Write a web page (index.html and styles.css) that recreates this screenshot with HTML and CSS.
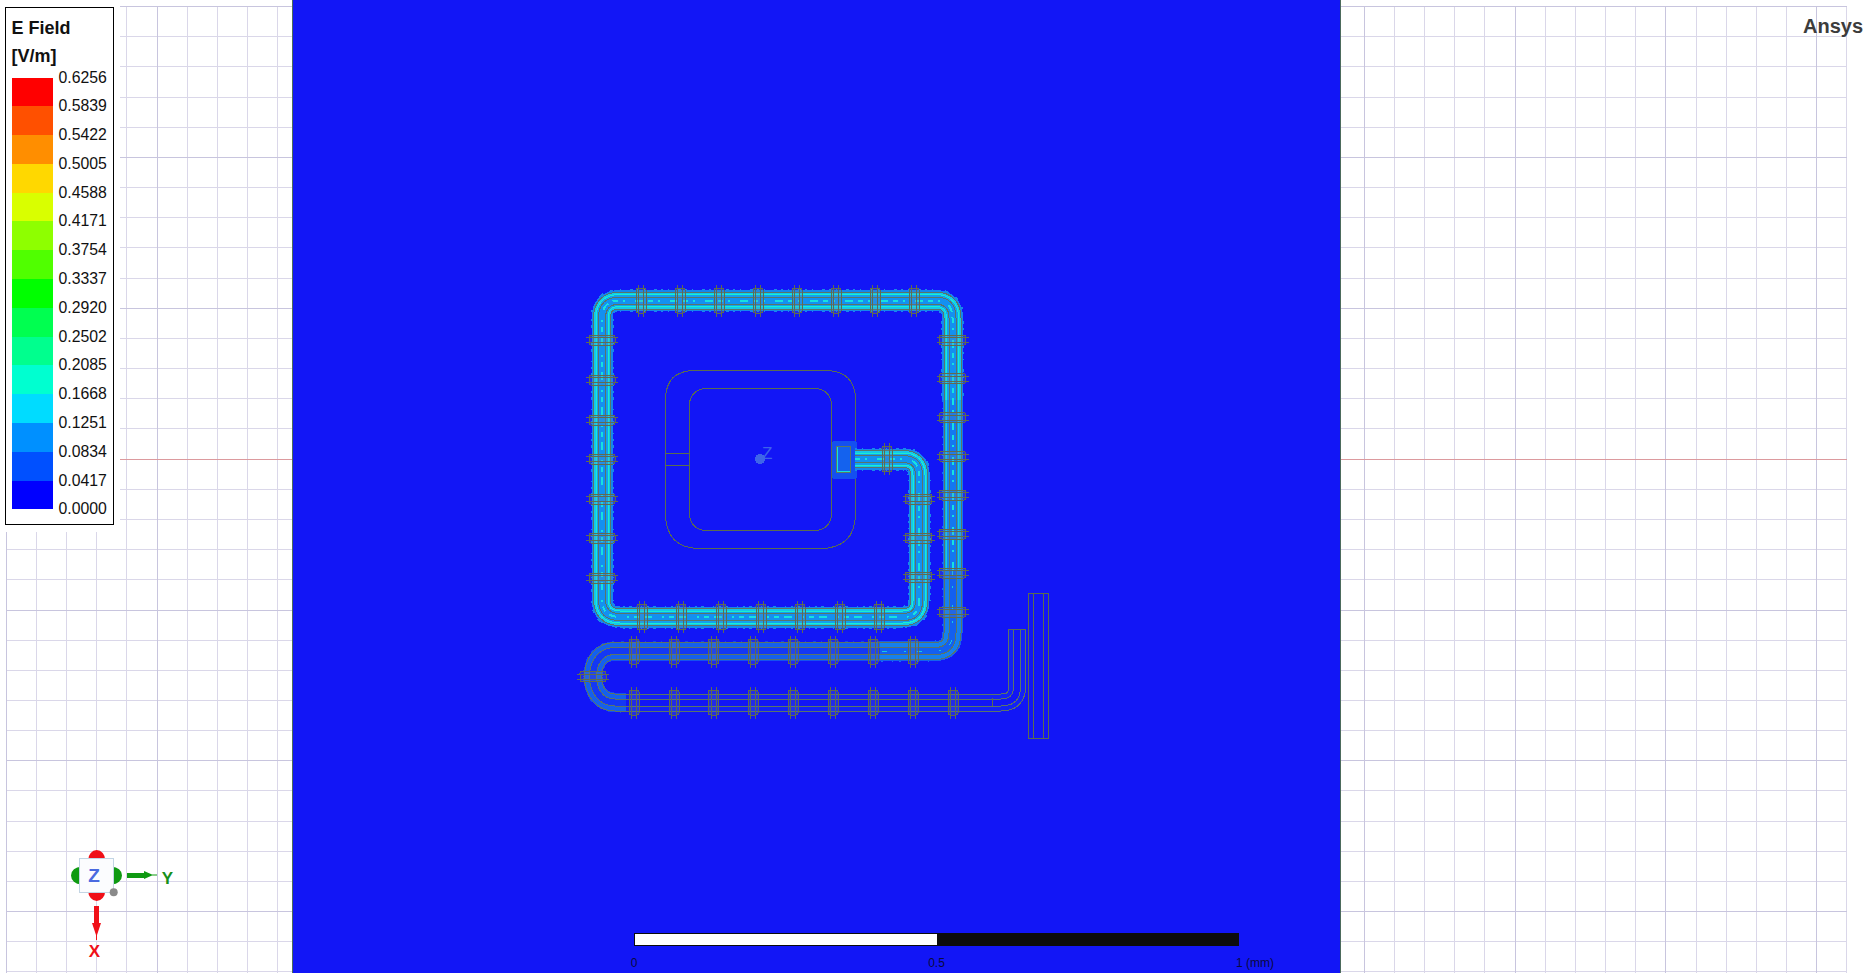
FILE: index.html
```html
<!DOCTYPE html>
<html lang="en">
<head>
<meta charset="utf-8">
<title>E Field</title>
<link rel="stylesheet" href="styles.css">
</head>
<body>
<main class="viewport">
  <section class="pane pane-left">
    <svg class="grid" width="292" height="973" viewBox="0 0 292 973">
      <path class="minor" d="M36.500 6V973M66.500 6V973M96.500 6V973M126.500 6V973M187.500 6V973M217.500 6V973M247.500 6V973M277.500 6V973M6 36.500H292M6 66.500H292M6 97.500H292M6 127.500H292M6 187.500H292M6 217.500H292M6 247.500H292M6 278.500H292M6 338.500H292M6 368.500H292M6 398.500H292M6 428.500H292M6 489.500H292M6 519.500H292M6 549.500H292M6 579.500H292M6 640.500H292M6 670.500H292M6 700.500H292M6 730.500H292M6 790.500H292M6 821.500H292M6 851.500H292M6 881.500H292M6 941.500H292M6 971.500H292"/>
      <path class="major" d="M6.500 6V973M157.500 6V973M6 6.500H292M6 157.500H292M6 308.500H292M6 610.500H292M6 760.500H292M6 911.500H292"/>
      <path class="axis" d="M6 459.500H292"/>
    </svg>
    <div class="legend-mask">
      <div class="legend">
        <div class="legend-title">E Field</div>
        <div class="legend-title">[V/m]</div>
        <div class="legend-body">
          <div class="swatches">
            <span class="sw sw1"></span><span class="sw sw2"></span><span class="sw sw3"></span><span class="sw sw4"></span><span class="sw sw5"></span>
            <span class="sw sw6"></span><span class="sw sw7"></span><span class="sw sw8"></span><span class="sw sw9"></span><span class="sw sw10"></span>
            <span class="sw sw11"></span><span class="sw sw12"></span><span class="sw sw13"></span><span class="sw sw14"></span><span class="sw sw15"></span>
          </div>
          <div class="labels">
            <span>0.6256</span><span>0.5839</span><span>0.5422</span><span>0.5005</span><span>0.4588</span><span>0.4171</span><span>0.3754</span><span>0.3337</span>
            <span>0.2920</span><span>0.2502</span><span>0.2085</span><span>0.1668</span><span>0.1251</span><span>0.0834</span><span>0.0417</span><span>0.0000</span>
          </div>
        </div>
      </div>
    </div>
    <svg class="triad" width="120" height="123" viewBox="60 850 120 123">
      <ellipse class="t-red" cx="96.700" cy="860" rx="8.500" ry="10"/>
      <ellipse class="t-red" cx="96.700" cy="891" rx="8.500" ry="10"/>
      <ellipse class="t-green" cx="81" cy="875.500" rx="10" ry="8.700"/>
      <ellipse class="t-green" cx="112" cy="875.500" rx="10" ry="8.700"/>
      <rect class="t-cube" x="79.500" y="858.500" width="34" height="34"/>
      <circle class="t-ball" cx="113.700" cy="892.300" r="4"/>
      <text class="t-letter t-z" x="94" y="882">Z</text>
      <path class="t-green" d="M127 873H144V871L152 874.500H157V875.500H152L144 879V878H127Z"/>
      <path class="t-red" d="M94 906H99V923H101L97 935V940H96V935L92 923H94Z"/>
      <text class="t-letter t-y" x="167.500" y="884">Y</text>
      <text class="t-letter t-x" x="94.500" y="957">X</text>
    </svg>
  </section>

  <section class="field">
    <svg class="diagram" width="1049" height="973" viewBox="292 0 1049 973">
      <defs>
        <path id="p-hot" d="M855 459H903Q919 459 919 475V601Q919 617 903 617H620Q602 617 602 599V318Q602 300.500 620 300.500H935Q952.500 300.500 952.500 318V400"/>
        <path id="p-warm" d="M952.500 400V570"/>
        <path id="p-mid" d="M952.500 570V633Q952.500 651 935 651H880"/>
        <path id="p-low" d="M880 651H615C601 651 593 662 593 676.500C593 691 601 702.500 615 702.500H626"/>
        <path id="p-tail" d="M626 702.500H1001Q1017 702.500 1017 687V629.500"/>
        <g id="bv">
          <rect class="br-in" x="-5" y="-12.500" width="10" height="25" rx="2"/>
          <path class="br" d="M-2.500 -16V16M2.500 -16V16"/>
        </g>
        <g id="bh">
          <rect class="br-in" x="-13" y="-5" width="26" height="10" rx="2"/>
          <path class="br" d="M-16 -2.500H16M-16 2.500H16"/>
        </g>
      </defs>

      <path class="edge" d="M292.500 0V973M1340.500 0V973"/>

      <g class="rings">
        <path d="M855.500 446V400Q855.500 370.500 825 370.500H695Q665.500 370.500 665.500 400V513Q665.500 548.500 700 548.500H820Q855.500 548.500 855.500 513V473"/>
        <rect x="689.500" y="388.500" width="142" height="142" rx="16"/>
        <path d="M665.500 453.500H689.500M665.500 465.500H689.500"/>
      </g>

      <rect class="pad-glow" x="832" y="441" width="25" height="38" rx="3"/>

      <use href="#p-hot" class="h-noise"/>
      <use href="#p-hot" class="h-fringe"/>
      <use href="#p-hot" class="rail-o"/>
      <use href="#p-hot" class="h-band"/>
      <use href="#p-hot" class="h-bright"/>
      <use href="#p-hot" class="h-band2"/>
      <use href="#p-hot" class="rail-i"/>
      <use href="#p-hot" class="h-core"/>
      <use href="#p-hot" class="h-spark"/>

      <use href="#p-warm" class="m-noise"/>
      <use href="#p-warm" class="w-fringe"/>
      <use href="#p-warm" class="rail-o"/>
      <use href="#p-warm" class="w-band"/>
      <use href="#p-warm" class="w-bright"/>
      <use href="#p-warm" class="w-band2"/>
      <use href="#p-warm" class="rail-i"/>
      <use href="#p-warm" class="w-core"/>
      <use href="#p-warm" class="h-spark"/>

      <use href="#p-mid" class="m-noise"/>
      <use href="#p-mid" class="m-fringe"/>
      <use href="#p-mid" class="rail-o"/>
      <use href="#p-mid" class="m-band"/>
      <use href="#p-mid" class="rail-i"/>
      <use href="#p-mid" class="m-core"/>
      <use href="#p-mid" class="m-spark"/>

      <use href="#p-low" class="l-noise"/>
      <use href="#p-low" class="l-fringe"/>
      <use href="#p-low" class="rail-o"/>
      <use href="#p-low" class="l-band"/>
      <use href="#p-low" class="rail-i"/>
      <use href="#p-low" class="l-core"/>

      <use href="#p-tail" class="rail-o"/>
      <use href="#p-tail" class="t-band"/>
      <use href="#p-tail" class="rail-i"/>
      <use href="#p-tail" class="t-core"/>

      <g class="rings">
        <path d="M1008 629.500H1026M992.500 698V706"/>
        <rect x="1028.500" y="593.500" width="20" height="145"/>
        <path d="M1033.500 594V738M1043.500 594V738"/>
      </g>

      <rect class="pad-in" x="837" y="446.500" width="13.500" height="25"/>
      <rect class="pad-out" x="836.500" y="446" width="14" height="26"/>

      <use href="#bv" x="641" y="300.500"/><use href="#bv" x="680" y="300.500"/><use href="#bv" x="719" y="300.500"/><use href="#bv" x="758" y="300.500"/>
      <use href="#bv" x="797" y="300.500"/><use href="#bv" x="836" y="300.500"/><use href="#bv" x="875" y="300.500"/><use href="#bv" x="914" y="300.500"/>

      <use href="#bh" x="602" y="340"/><use href="#bh" x="602" y="380"/><use href="#bh" x="602" y="420"/><use href="#bh" x="602" y="459"/>
      <use href="#bh" x="602" y="499"/><use href="#bh" x="602" y="538"/><use href="#bh" x="602" y="578"/>

      <use href="#bh" x="952.500" y="340"/><use href="#bh" x="952.500" y="378.500"/><use href="#bh" x="952.500" y="417.500"/><use href="#bh" x="952.500" y="456.500"/>
      <use href="#bh" x="952.500" y="495"/><use href="#bh" x="952.500" y="534"/><use href="#bh" x="952.500" y="573"/><use href="#bh" x="952.500" y="612"/>

      <use href="#bh" x="918.500" y="499"/><use href="#bh" x="918.500" y="538"/><use href="#bh" x="918.500" y="577"/>
      <use href="#bv" x="887" y="459"/>

      <use href="#bv" x="642" y="617"/><use href="#bv" x="681" y="617"/><use href="#bv" x="721" y="617"/><use href="#bv" x="761" y="617"/>
      <use href="#bv" x="800" y="617"/><use href="#bv" x="840" y="617"/><use href="#bv" x="879" y="617"/>

      <use href="#bv" x="634" y="651.500"/><use href="#bv" x="674" y="651.500"/><use href="#bv" x="713.500" y="651.500"/><use href="#bv" x="753" y="651.500"/>
      <use href="#bv" x="793" y="651.500"/><use href="#bv" x="833" y="651.500"/><use href="#bv" x="873" y="651.500"/><use href="#bv" x="913" y="651.500"/>

      <use href="#bv" x="634" y="702.500"/><use href="#bv" x="674" y="702.500"/><use href="#bv" x="713.500" y="702.500"/><use href="#bv" x="753" y="702.500"/>
      <use href="#bv" x="793" y="702.500"/><use href="#bv" x="833" y="702.500"/><use href="#bv" x="873" y="702.500"/><use href="#bv" x="913" y="702.500"/><use href="#bv" x="953" y="702.500"/>

      <use href="#bh" x="593" y="676.500"/>

      <path class="mark-red" d="M756 596H765.500L762 602L761.500 610H760L759.500 602Z"/>
      <path class="mark-green" d="M897 455L911 459L897 463Z"/>

      <text class="mark-z" x="762" y="458.500">Z</text>
      <circle class="mark-dot" cx="760" cy="459" r="5"/>
    </svg>
    <div class="scale">
      <div class="scale-bar"><span class="scale-white"></span><span class="scale-black"></span></div>
      <div class="scale-labels">
        <span class="tick">0</span>
        <span class="tick">0.5</span>
        <span class="tick tick-end">1 (mm)</span>
      </div>
    </div>
  </section>

  <section class="pane pane-right">
    <svg class="grid" width="534" height="973" viewBox="1341 0 534 973">
      <path class="minor" d="M1394.500 6V973M1424.500 6V973M1454.500 6V973M1484.500 6V973M1545.500 6V973M1575.500 6V973M1605.500 6V973M1635.500 6V973M1696.500 6V973M1726.500 6V973M1756.500 6V973M1786.500 6V973M1846.500 6V973M1341 36.500H1847M1341 66.500H1847M1341 97.500H1847M1341 127.500H1847M1341 187.500H1847M1341 217.500H1847M1341 247.500H1847M1341 278.500H1847M1341 338.500H1847M1341 368.500H1847M1341 398.500H1847M1341 428.500H1847M1341 489.500H1847M1341 519.500H1847M1341 549.500H1847M1341 579.500H1847M1341 640.500H1847M1341 670.500H1847M1341 700.500H1847M1341 730.500H1847M1341 790.500H1847M1341 821.500H1847M1341 851.500H1847M1341 881.500H1847M1341 941.500H1847M1341 971.500H1847"/>
      <path class="major" d="M1364.500 6V973M1515.500 6V973M1665.500 6V973M1816.500 6V973M1341 6.500H1847M1341 157.500H1847M1341 308.500H1847M1341 610.500H1847M1341 760.500H1847M1341 911.500H1847"/>
      <path class="axis" d="M1341 459.500H1847"/>
    </svg>
    <div class="brand">Ansys</div>
  </section>
</main>
</body>
</html>
```
FILE: styles.css
```css
* { box-sizing: border-box; }
html, body { margin: 0; padding: 0; background: #fff; }
body { font-family: "Liberation Sans", Arial, sans-serif; overflow: hidden; }

.viewport { display: flex; width: 1875px; height: 973px; overflow: hidden; }
.pane { position: relative; height: 973px; background: #fff; }
.pane-left { flex: 0 0 292px; }
.pane-right { flex: 0 0 534px; }
.field { position: relative; flex: 0 0 1049px; height: 973px; background: #1216f6; }

svg { display: block; }
.grid path { fill: none; stroke-width: 1; shape-rendering: crispEdges; }
.minor { stroke: #dad7e9; }
.major { stroke: #c8c5de; }
.axis { stroke: #dc9a9e; }

.legend-mask { position: absolute; left: 0; top: 0; width: 120px; height: 532px; background: #fff; padding: 7px 0 0 5px; }
.legend { width: 109px; height: 518px; border: 1.5px solid #000; background: #fff; padding: 7.5px 0 0 5.5px; color: #111; }
.legend-title { font-size: 18px; font-weight: 700; line-height: 24px; margin-bottom: 4px; position: relative; top: 0.5px; }
.legend-title + .legend-title { margin-bottom: 0; }
.legend-body { display: flex; gap: 6px; }
.swatches { display: flex; flex-direction: column; width: 41px; height: 432px; margin-top: 10px; }
.sw { flex: 1 1 0; }
.sw1 { background: #ff0000; } .sw2 { background: #ff5000; } .sw3 { background: #ff8e00; }
.sw4 { background: #ffd800; } .sw5 { background: #d9ff00; } .sw6 { background: #8eff00; }
.sw7 { background: #50ff00; } .sw8 { background: #00ff00; } .sw9 { background: #00ff50; }
.sw10 { background: #00ff8e; } .sw11 { background: #00ffd0; } .sw12 { background: #00dcff; }
.sw13 { background: #0090ff; } .sw14 { background: #0050ff; } .sw15 { background: #0000ff; }
.labels { display: flex; flex-direction: column; gap: 8.800px; font-size: 15.800px; line-height: 20px; }

.triad { position: absolute; left: 60px; top: 850px; }
.t-red { fill: #f01018; }
.t-green { fill: #0f9a12; }
.t-cube { fill: #fbfcfe; stroke: #c3d5e4; stroke-width: 1; }
.t-ball { fill: #8a8a8a; }
.t-letter { font-family: "Liberation Sans", Arial, sans-serif; font-weight: 700; text-anchor: middle; font-size: 17px; }
.t-z { fill: #4a6ae0; font-size: 19px; }
.t-y { fill: #16901a; }
.t-x { fill: #f01018; }

.diagram { shape-rendering: crispEdges; }
.diagram use, .diagram path { fill: none; }
.edge { stroke: #4c6a5c; stroke-width: 1; }
.rings, .rings path, .rings rect { fill: none; stroke: #5a6c50; stroke-width: 1; }
.pad-glow { fill: #1450f0; }
.pad-in { fill: #1462ee; stroke: #17e0d8; stroke-width: 1.500; }
.pad-out { fill: none; stroke: #5a7a64; stroke-width: 1; }

.rail-o { stroke: #5a7468; stroke-width: 18; }
.rail-i { stroke: #5a7468; stroke-width: 8; }

.h-noise { stroke: #168ae8; stroke-width: 23; stroke-dasharray: 2 5 1 9 3 4; }
.h-fringe { stroke: #1586ec; stroke-width: 21; }
.h-band { stroke: #14c8ec; stroke-width: 16; }
.h-bright { stroke: #18f0d0; stroke-width: 13; }
.h-band2 { stroke: #14a0ee; stroke-width: 11; }
.h-core { stroke: #1490f0; stroke-width: 6; }
.h-spark { stroke: #18e0e0; stroke-width: 2; stroke-dasharray: 5 5 2 10 8 5; }

.w-fringe { stroke: #1478ee; stroke-width: 20; }
.w-band { stroke: #14a8ec; stroke-width: 16; }
.w-bright { stroke: #16d0dc; stroke-width: 13; }
.w-band2 { stroke: #1488f0; stroke-width: 11; }
.w-core { stroke: #1478f0; stroke-width: 6; }

.m-noise { stroke: #1470ee; stroke-width: 21; stroke-dasharray: 2 6 1 9; }
.m-fringe { stroke: #1462ee; stroke-width: 20; }
.m-band { stroke: #1580ee; stroke-width: 16; }
.m-core { stroke: #1360f0; stroke-width: 6; }
.m-spark { stroke: #16c8e0; stroke-width: 1; stroke-dasharray: 5 11 2 17; }

.l-noise { stroke: #1448f0; stroke-width: 20; stroke-dasharray: 3 7 1 5; }
.l-fringe { stroke: #1452f0; stroke-width: 19; }
.l-band { stroke: #1460ee; stroke-width: 16; }
.l-core { stroke: #1438f4; stroke-width: 6; }

.t-band { stroke: #1322f6; stroke-width: 16; }
.t-core { stroke: #1216f6; stroke-width: 6; }

.br { fill: none; stroke: #5f6b52; stroke-width: 1; }
.br-in { fill: #6a88b0; fill-opacity: 0.2; stroke: #5f6b52; stroke-width: 1; }
.mark-red { fill: #f51418; }
.mark-green { fill: #16a314; }
.mark-z { fill: #3c62ea; font-family: "Liberation Sans", Arial, sans-serif; font-size: 17px; }
.mark-dot { fill: #3f66e8; }

.scale { position: absolute; left: 342px; top: 933px; width: 605px; }
.scale-bar { display: flex; height: 13px; border: 1.500px solid #0c0c0c; }
.scale-white { flex: 1 1 0; background: #fff; }
.scale-black { flex: 1 1 0; background: #0c0c0c; }
.scale-labels { display: flex; justify-content: space-between; margin-top: 10px; font-size: 12px; line-height: 14px; color: #0a0a40; }
.tick { width: 0; display: flex; justify-content: center; white-space: nowrap; }
.tick-end { justify-content: flex-start; margin-left: -3px; margin-right: 3px; }

.brand { position: absolute; right: 12px; top: 14px; font-size: 20px; font-weight: 700; line-height: 24px; color: #3c3c3c; }
```
